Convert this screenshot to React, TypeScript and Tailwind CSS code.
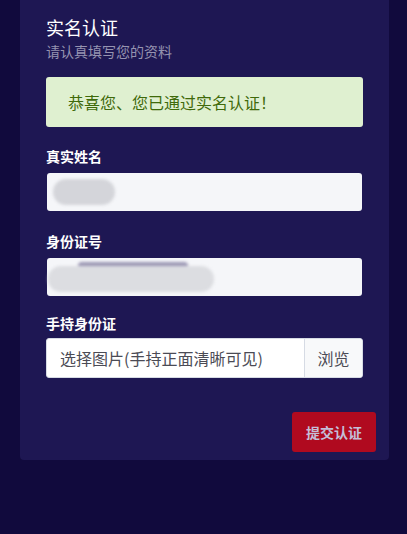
export default function App() {
  return (
    <div className="min-h-[534px] w-full bg-[#110a3d] pl-5 pr-[18px] pb-[74px] font-['Noto_Sans_CJK_SC',sans-serif]">
      <div className="rounded-b-[4px] bg-[#1e1753] px-[26px] pb-[8px] pt-[14px]">
        <h1 className="text-[18px] leading-[26px] text-white">实名认证</h1>
        <p className="mt-[1px] text-[14px] leading-[20px] text-[#9593b0]">请认真填写您的资料</p>

        <div className="mt-[16px] flex h-[50px] items-center rounded-[3px] bg-[#dff0d0] pl-[22px] text-[16px] text-[#3f6a0a]">
          恭喜您、您已通过实名认证！
        </div>

        <label className="mt-[19px] block text-[14px] font-bold leading-[20px] text-white">真实姓名</label>
        <div className="mx-[1px] mt-[7px] flex h-[38px] items-center rounded-[3px] bg-[#f5f6f9] px-[6px]">
          <div className="flex h-[26px] items-center">
            <div className="h-[26px] w-[62px] rounded-full bg-[#d4d5da] blur-[1.5px]" />
          </div>
        </div>

        <label className="mt-[20px] block text-[14px] font-bold leading-[20px] text-white">身份证号</label>
        <div className="mx-[1px] mt-[7px] flex h-[38px] items-center rounded-[3px] bg-[#f5f6f9]">
          <div className="relative ml-[1px] h-[30px] w-[170px]">
            <div className="absolute left-[30px] top-0 h-[8px] w-[110px] rounded-full bg-[#9c98b5] blur-[1.5px]" />
            <div className="absolute left-0 top-[4px] h-[26px] w-[166px] rounded-full bg-[#dcdde1] blur-[1.5px]" />
          </div>
        </div>

        <label className="mt-[17px] block text-[14px] font-bold leading-[20px] text-white">手持身份证</label>
        <div className="mt-[5px] flex h-[40px] overflow-hidden rounded-[3px] border border-[#d6dbe4] bg-white">
          <div className="flex flex-1 items-center pl-[13px] text-[16px] text-[#4b4b55]">选择图片(手持正面清晰可见)</div>
          <div className="flex w-[58px] items-center justify-center border-l border-[#d6dbe4] bg-[#f8f9fa] text-[16px] text-[#4b4b55]">浏览</div>
        </div>

        <div className="-mr-[13px] mt-[34px] flex justify-end">
          <button className="h-[40px] w-[84px] rounded-[3px] bg-[#b00a1f] text-[14px] font-bold text-[#c4bed8]">提交认证</button>
        </div>
      </div>
    </div>
  );
}
